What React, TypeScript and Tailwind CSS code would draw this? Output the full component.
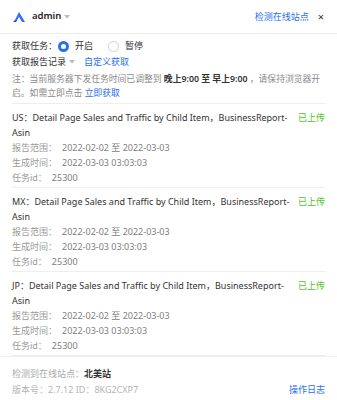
import React from "react";

const font = { fontFamily: '"Noto Sans", "Noto Sans CJK SC", sans-serif' };

function Item({ code }: { code: string }) {
  return (
    <div className="mx-[12px] border-b border-[#eeeeee] pt-[6px] pb-[2px] leading-[15px]">
      <div className="flex justify-between">
        <div className="text-[#333333] w-[280px]">
          {code}：Detail Page Sales and Traffic by Child Item，BusinessReport-Asin
        </div>
        <div className="text-[#52c41a] whitespace-nowrap">已上传</div>
      </div>
      <div className="text-[#9a9a9a]">
        报告范围：<span className="ml-[5px] text-[#808080]">2022-02-02 至 2022-03-03</span>
      </div>
      <div className="text-[#9a9a9a]">
        生成时间：<span className="ml-[5px] text-[#808080]">2022-03-03 03:03:03</span>
      </div>
      <div className="text-[#9a9a9a]">
        任务id：<span className="ml-[5px] text-[#808080]">25300</span>
      </div>
    </div>
  );
}

export default function App() {
  return (
    <div className="w-[337px] h-[400px] bg-white text-[9px] overflow-hidden flex flex-col" style={font}>
      <div className="h-[34px] shrink-0 flex items-center justify-between px-[13px] border-b border-[#eeeeee]">
        <div className="flex items-center">
          <svg width="12" height="10" viewBox="0 0 12 10">
            <path d="M6 0 L12 10 L9 10 L6 4.8 L4.2 8 L2 8 Z" fill="#2f6bff" />
            <path d="M2 8 L4.2 8 L3.1 10 L0 10 Z" fill="#1a4fd6" />
          </svg>
          <span className="ml-[7px] text-[9.5px] font-semibold text-[#222]">admin</span>
          <svg className="ml-[3px]" width="6" height="4" viewBox="0 0 6 4">
            <path d="M0 0 L6 0 L3 3.5 Z" fill="#bbbbbb" />
          </svg>
        </div>
        <div className="flex items-center">
          <span className="text-[#2a6ff0]">检测在线站点</span>
          <span className="ml-[9px] text-[#333] text-[11px] leading-none">×</span>
        </div>
      </div>

      <div className="px-[12px] shrink-0">
        <div className="mt-[4px] h-[16px] flex items-center text-[#333]">
          <span>获取任务：</span>
          <span className="ml-[1px] w-[11px] h-[11px] rounded-full border-[3px] border-[#2a6ff0] bg-white" />
          <span className="ml-[6px]">开启</span>
          <span className="ml-[15px] w-[11px] h-[11px] rounded-full border border-[#d0d0d0] bg-white" />
          <span className="ml-[6px]">暂停</span>
        </div>
        <div className="h-[16px] flex items-center text-[#333]">
          <span>获取报告记录</span>
          <svg className="ml-[3px]" width="6" height="4" viewBox="0 0 6 4">
            <path d="M0 0 L6 0 L3 3.5 Z" fill="#bbbbbb" />
          </svg>
          <span className="ml-[9px] text-[#2a6ff0]">自定义获取</span>
        </div>
        <div className="mt-[2px] pb-[3px] text-[8.8px] leading-[14px] text-[#8a8a8a] border-b border-[#eeeeee]">
          注：当前服务器下发任务时间已调整到 <b className="text-[#333] font-semibold">晚上9:00 至 早上9:00</b> ，请保持浏览器开启。如需立即点击{" "}
          <span className="text-[#2a6ff0]">立即获取</span>
        </div>
      </div>

      <Item code="US" />
      <Item code="MX" />
      <Item code="JP" />

      <div className="flex-1" />
      <div className="shrink-0 border-t border-[#eeeeee] px-[12px] pt-[9px] pb-[4px] leading-[16px]">
        <div className="text-[#aaaaaa]">
          检测到在线站点：<span className="text-[#333] font-semibold">北美站</span>
        </div>
        <div className="flex justify-between">
          <span className="text-[#b5b5b5]">版本号：2.7.12 ID：8KG2CXP7</span>
          <span className="text-[#2a6ff0]">操作日志</span>
        </div>
      </div>
    </div>
  );
}
